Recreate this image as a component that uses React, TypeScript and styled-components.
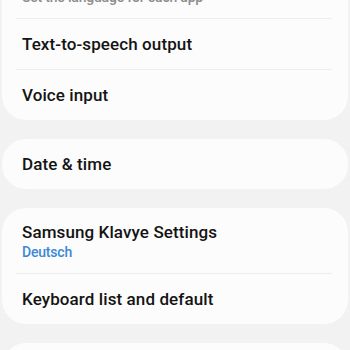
import styled, { createGlobalStyle } from "styled-components";

const Global = createGlobalStyle`
    html, body {
        margin: 0;
        padding: 0;
        background: #f2f2f2;
        overflow: hidden;
    }
    body {
        font-family: Roboto, "Noto Sans", sans-serif;
        -webkit-font-smoothing: antialiased;
    }
`;

const Screen = styled.main`
    width: 350px;
    height: 350px;
    overflow: hidden;
`;

const List = styled.div`
    display: flex;
    flex-direction: column;
    gap: 19px;
    margin-top: -47px;
`;

const Card = styled.section`
    background: #fcfcfc;
    border-radius: 24px;
    margin: 0 2px;
    display: flex;
    flex-direction: column;
`;

const Row = styled.div<{ $tall?: boolean }>`
    display: flex;
    flex-direction: column;
    justify-content: center;
    height: ${(p) => (p.$tall ? "65px" : "50px")};
    padding: ${(p) => (p.$tall ? "1px 20px 0" : "0 20px")};
    box-sizing: border-box;
`;

const Title = styled.div`
    font-size: 17px;
    font-weight: 500;
    line-height: 22px;
    color: #141414;
    letter-spacing: 0.1px;
`;

const Sub = styled.div<{ $accent?: boolean }>`
    font-size: 14px;
    font-weight: 500;
    line-height: 19px;
    color: ${(p) => (p.$accent ? "#3b88d6" : "#8c8c8c")};
    letter-spacing: -0.2px;
`;

const Divider = styled.hr`
    border: 0;
    height: 1px;
    background: #ededed;
    margin: 0 16px 0 14px;
`;

type Item = { title: string; sub?: string; accent?: boolean };

const groups: Item[][] = [
    [
        { title: "Languages", sub: "Set the language for each app" },
        { title: "Text-to-speech output" },
        { title: "Voice input" },
    ],
    [{ title: "Date & time" }],
    [
        { title: "Samsung Klavye Settings", sub: "Deutsch", accent: true },
        { title: "Keyboard list and default" },
    ],
    [{ title: "Physical keyboard" }],
];

export default function App(): JSX.Element {
    return (
        <Screen>
            <Global />
            <List>
                {groups.map((items, g) => (
                    <Card key={g}>
                        {items.map((it, i) => (
                            <div key={it.title}>
                                {i > 0 && <Divider />}
                                <Row $tall={!!it.sub}>
                                    <Title>{it.title}</Title>
                                    {it.sub && <Sub $accent={it.accent}>{it.sub}</Sub>}
                                </Row>
                            </div>
                        ))}
                    </Card>
                ))}
            </List>
        </Screen>
    );
}
